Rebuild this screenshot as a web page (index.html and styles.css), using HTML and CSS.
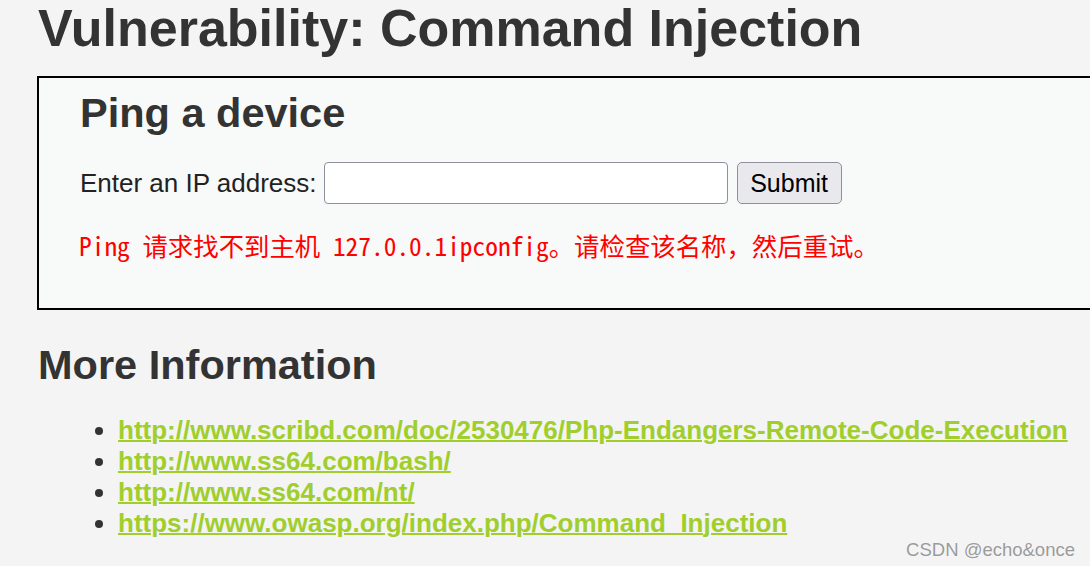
FILE: index.html
```html
<!DOCTYPE html>
<html lang="en">
<head>
<meta charset="utf-8">
<title>Vulnerability: Command Injection</title>
<link rel="stylesheet" href="styles.css">
</head>
<body>
<div class="page">
  <h1 class="title">Vulnerability: Command Injection</h1>
  <div class="vulnerable-code-area">
    <h2 class="box-title">Ping a device</h2>
    <form class="ping-form">
      <label class="ip-label" for="ip">Enter an IP address:</label>
      <input class="ip-input" id="ip" type="text" name="ip">
      <button class="submit-btn" type="button">Submit</button>
    </form>
    <pre class="output">Ping 请求找不到主机 127.0.0.1ipconfig。请检查该名称，然后重试。</pre>
  </div>
  <h2 class="section-title">More Information</h2>
  <ul class="links">
    <li><a href="#">http://www.scribd.com/doc/2530476/Php-Endangers-Remote-Code-Execution</a></li>
    <li><a href="#">http://www.ss64.com/bash/</a></li>
    <li><a href="#">http://www.ss64.com/nt/</a></li>
    <li><a href="#">https://www.owasp.org/index.php/Command_Injection</a></li>
  </ul>
</div>
<div class="watermark">CSDN @echo&amp;once</div>
</body>
</html>
```
FILE: styles.css
```css
html, body {
  margin: 0;
  padding: 0;
  overflow: hidden;
  background: #f4f4f4;
}
body {
  font-family: "Liberation Sans", Arial, sans-serif;
  color: #333333;
  width: 1090px;
  height: 566px;
  position: relative;
}
.page {
  padding-left: 37px;
}
.title {
  margin: 0;
  font-size: 52px;
  line-height: 56px;
  font-weight: bold;
  color: #333333;
  padding-left: 1px;
}
.vulnerable-code-area {
  margin-top: 20px;
  width: 1100px;
  border: 2px solid #000000;
  background: #f8f9f9;
  padding: 11px 0 0 41px;
  height: 219px;
  box-sizing: content-box;
}
.box-title {
  margin: 0;
  font-size: 41.5px;
  line-height: 48px;
  font-weight: bold;
  color: #333333;
}
.ping-form {
  margin-top: 25px;
  display: flex;
  align-items: center;
  height: 42px;
}
.ip-label {
  font-size: 26px;
  color: #222222;
  margin-right: 7px;
}
.ip-input {
  width: 404px;
  height: 42px;
  box-sizing: border-box;
  border: 1.5px solid #8f8f9d;
  border-radius: 4px;
  background: #ffffff;
  margin: 0;
  padding: 0 4px;
  font-size: 25px;
}
.submit-btn {
  margin-left: 9px;
  width: 105px;
  height: 42px;
  box-sizing: border-box;
  border: 1.5px solid #8f8f9d;
  border-radius: 5px;
  background: #e9e9ed;
  font-family: "Liberation Sans", Arial, sans-serif;
  font-size: 25px;
  color: #000000;
  padding: 0;
}
.output {
  margin: 26px 0 0 -1px;
  font-family: "Noto Sans Mono CJK SC", "Liberation Mono", monospace;
  font-size: 25.4px;
  line-height: 30px;
  color: #ff0000;
}
.section-title {
  margin: 31px 0 0 1px;
  font-size: 41.5px;
  line-height: 48px;
  font-weight: bold;
  color: #333333;
}
.links {
  margin: 26px 0 0 0;
  padding-left: 81px;
  font-size: 26px;
  line-height: 31px;
  font-weight: bold;
}
.links li {
  color: #333333;
}
.links a {
  color: #a0ce2c;
  text-decoration: underline;
  text-decoration-thickness: 2px;
}
.watermark {
  position: absolute;
  right: 15px;
  bottom: 5px;
  font-family: "Liberation Sans", Arial, sans-serif;
  font-size: 18.5px;
  color: #9a9a9a;
  text-shadow: 0 0 1px #ffffff;
}
```
